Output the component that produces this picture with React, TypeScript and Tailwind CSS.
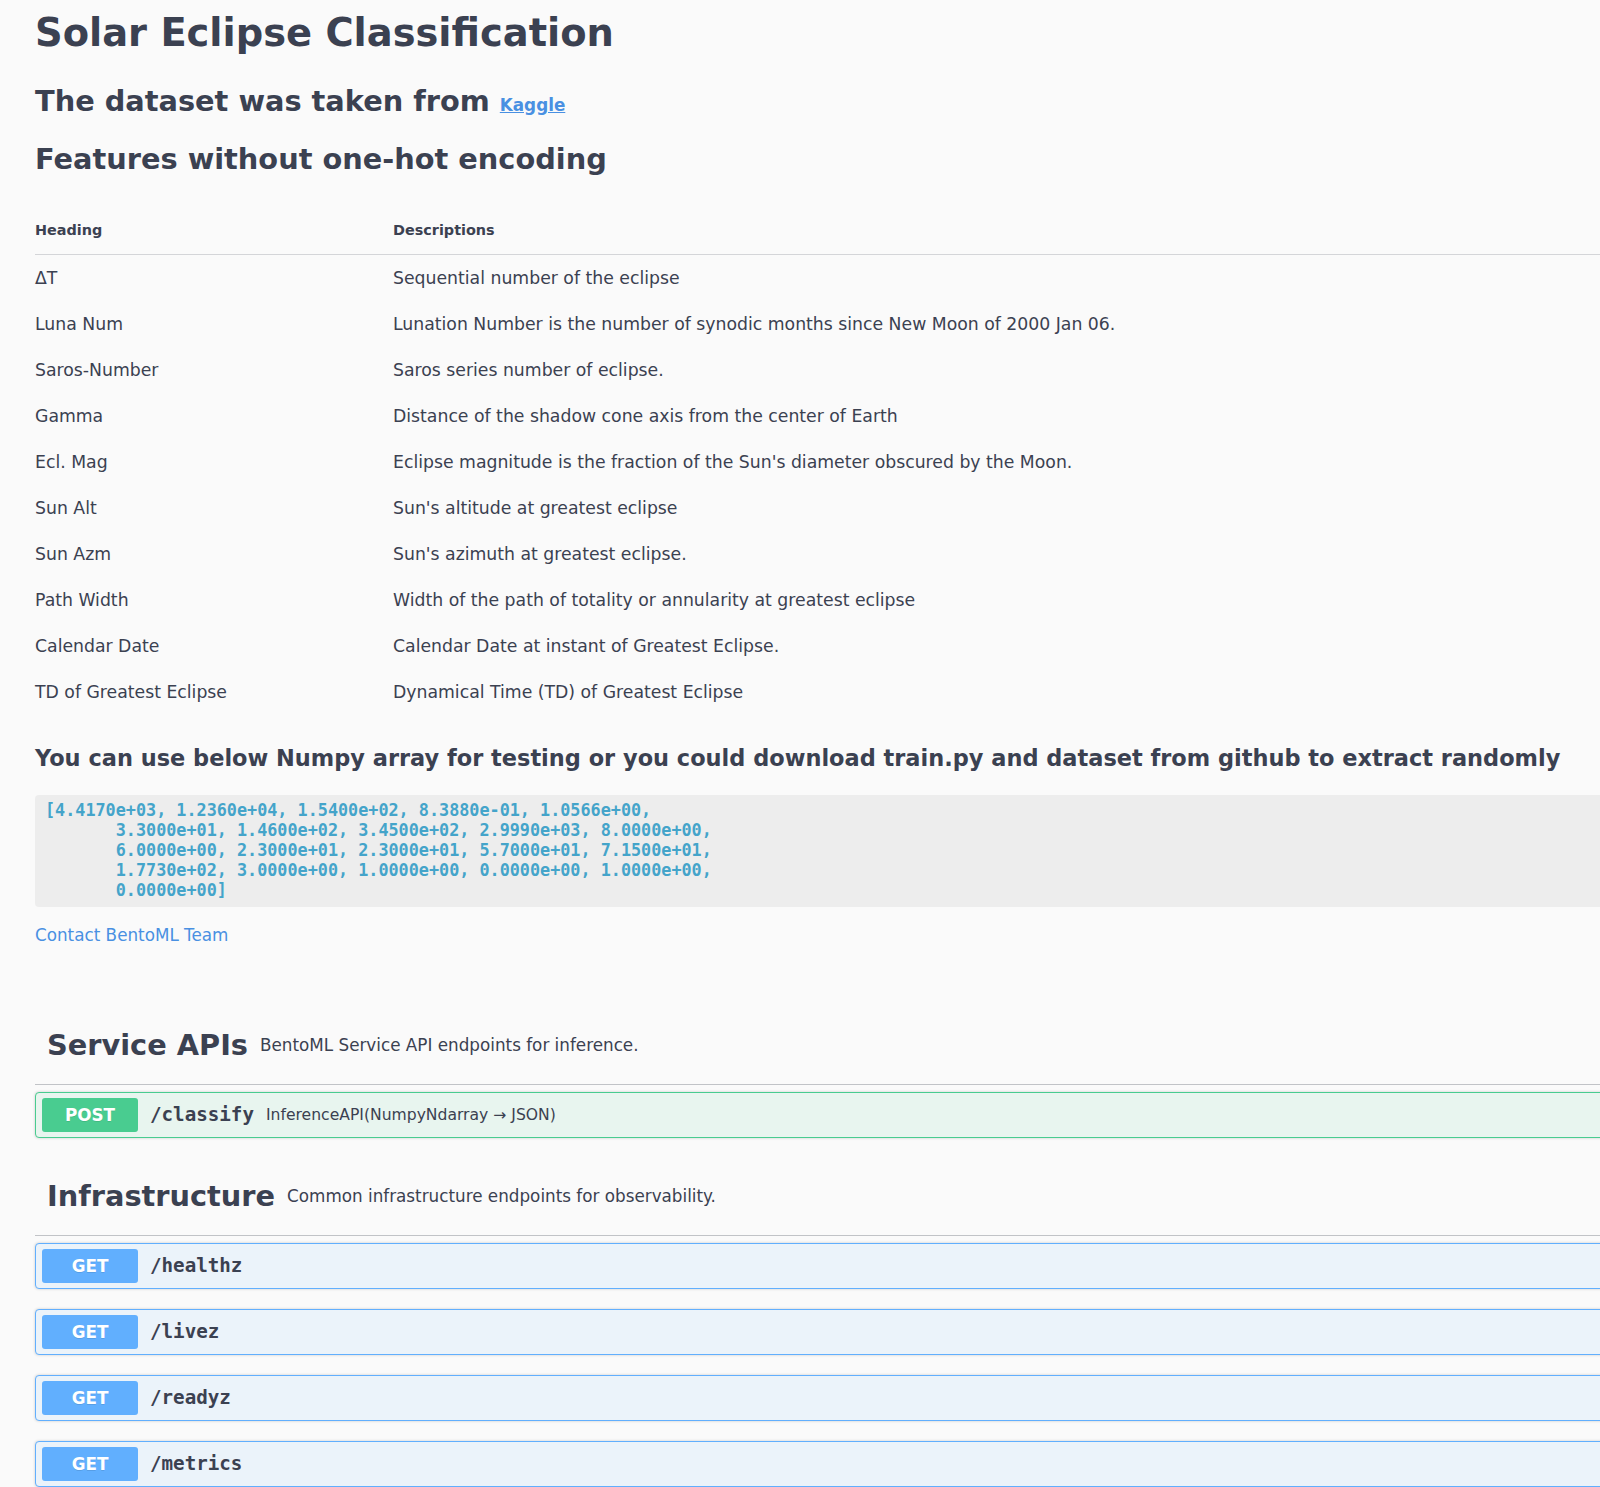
import React from "react";

const features: [string, string][] = [
  ["ΔT", "Sequential number of the eclipse"],
  ["Luna Num", "Lunation Number is the number of synodic months since New Moon of 2000 Jan 06."],
  ["Saros-Number", "Saros series number of eclipse."],
  ["Gamma", "Distance of the shadow cone axis from the center of Earth"],
  ["Ecl. Mag", "Eclipse magnitude is the fraction of the Sun's diameter obscured by the Moon."],
  ["Sun Alt", "Sun's altitude at greatest eclipse"],
  ["Sun Azm", "Sun's azimuth at greatest eclipse."],
  ["Path Width", "Width of the path of totality or annularity at greatest eclipse"],
  ["Calendar Date", "Calendar Date at instant of Greatest Eclipse."],
  ["TD of Greatest Eclipse", "Dynamical Time (TD) of Greatest Eclipse"],
];

const sample = `[4.4170e+03, 1.2360e+04, 1.5400e+02, 8.3880e-01, 1.0566e+00,
       3.3000e+01, 1.4600e+02, 3.4500e+02, 2.9990e+03, 8.0000e+00,
       6.0000e+00, 2.3000e+01, 2.3000e+01, 5.7000e+01, 7.1500e+01,
       1.7730e+02, 3.0000e+00, 1.0000e+00, 0.0000e+00, 1.0000e+00,
       0.0000e+00]`;

interface TagProps {
  title: string;
  description: string;
  className?: string;
}

const TagHeader: React.FC<TagProps> = ({ title, description, className }) => (
  <div
    className={`flex items-center pl-[12px] pt-[12px] pb-[22px] border-b border-[#c1c3c7] ${className ?? ""}`}
  >
    <h3 className="text-[28.8px] leading-[34px] font-bold">{title}</h3>
    <small className="px-[12px] text-[16.8px] leading-[20px]">{description}</small>
  </div>
);

interface OpblockProps {
  method: "POST" | "GET";
  path: string;
  summary?: string;
  className?: string;
}

const Opblock: React.FC<OpblockProps> = ({ method, path, summary, className }) => {
  const isPost = method === "POST";
  return (
    <div
      className={`flex items-center h-[46px] pl-[6px] border rounded-[4px] shadow-[0_0_3px_rgba(0,0,0,0.19)] ${
        isPost ? "bg-[#e8f5ef] border-[#49cc90]" : "bg-[#ebf3fa] border-[#61affe]"
      } ${className ?? ""}`}
    >
      <span
        className={`w-[96px] py-[7px] text-center text-white text-[16.8px] leading-[20px] font-bold rounded-[3px] [text-shadow:0_1px_0_rgba(0,0,0,0.1)] ${
          isPost ? "bg-[#49cc90]" : "bg-[#61affe]"
        }`}
      >
        {method}
      </span>
      <span className="px-[12px] font-['DejaVu_Sans_Mono',monospace] font-bold text-[19.2px] leading-[22px]">
        {path}
      </span>
      {summary && <span className="text-[15.6px] leading-[20px]">{summary}</span>}
    </div>
  );
};

export default function App() {
  return (
    <div className="min-h-screen w-full overflow-hidden bg-[#fafafa] text-[#3b4151] font-['DejaVu_Sans',sans-serif]">
      <div className="w-[1700px] pl-[35px] pb-[40px]">
        <h1 className="mt-[10px] text-[38.4px] leading-[46px] font-bold">
          Solar Eclipse Classification
        </h1>
        <h2 className="mt-[28px] text-[28.8px] leading-[34px] font-bold">
          The dataset was taken from{" "}
          <a href="#" className="text-[16.8px] text-[#4990e2] underline">
            Kaggle
          </a>
        </h2>
        <h2 className="mt-[20px] text-[28.8px] leading-[34px] font-bold">
          Features without one-hot encoding
        </h2>

        <div className="mt-[33px]">
          <div className="grid grid-cols-[358px_1fr] border-b border-[#d4d5d8] pt-[12px] pb-[15px] text-[14.4px] leading-[18px] font-bold">
            <div>Heading</div>
            <div>Descriptions</div>
          </div>
          {features.map(([name, desc]) => (
            <div
              key={name}
              className="grid grid-cols-[358px_1fr] py-3 text-[17.28px] leading-[22px]"
            >
              <div>{name}</div>
              <div>{desc}</div>
            </div>
          ))}
        </div>

        <h3 className="mt-[30px] text-[22.46px] leading-[27px] font-bold">
          You can use below Numpy array for testing or you could download train.py and dataset from github to extract randomly
        </h3>

        <pre className="mt-[23px] pt-[5px] pb-[7px] px-[10px] bg-[#ededed] rounded-[4px] text-[#44a4ca] font-['DejaVu_Sans_Mono',monospace] font-bold text-[16.8px] leading-[20px]">
          {sample}
        </pre>

        <div className="mt-[18px] text-[16.8px] leading-[20px]">
          <a href="#" className="text-[#4990e2]">
            Contact BentoML Team
          </a>
        </div>

        <TagHeader
          className="mt-[71px]"
          title="Service APIs"
          description="BentoML Service API endpoints for inference."
        />
        <Opblock
          className="mt-[7px]"
          method="POST"
          path="/classify"
          summary="InferenceAPI(NumpyNdarray → JSON)"
        />

        <TagHeader
          className="mt-[29px]"
          title="Infrastructure"
          description="Common infrastructure endpoints for observability."
        />
        <div className="mt-[7px] flex flex-col gap-[20px]">
          {["/healthz", "/livez", "/readyz", "/metrics"].map((p) => (
            <Opblock key={p} method="GET" path={p} />
          ))}
        </div>
      </div>
    </div>
  );
}
